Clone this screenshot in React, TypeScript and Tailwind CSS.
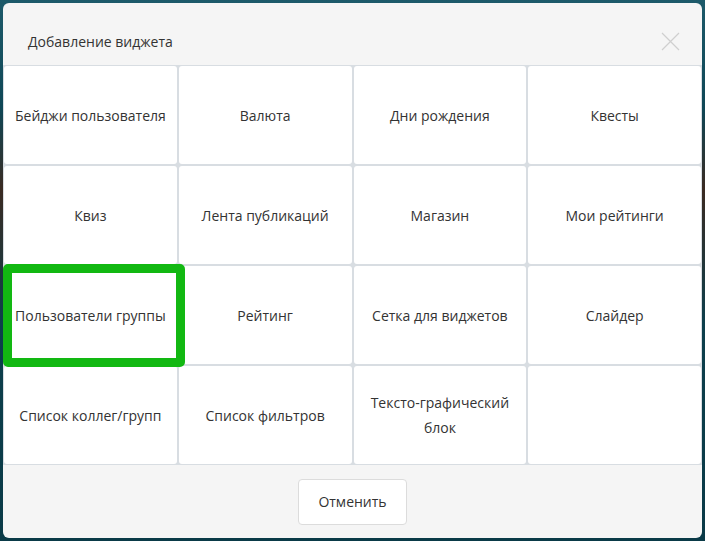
const widgets = [
  "Бейджи пользователя",
  "Валюта",
  "Дни рождения",
  "Квесты",
  "Квиз",
  "Лента публикаций",
  "Магазин",
  "Мои рейтинги",
  "Пользователи группы",
  "Рейтинг",
  "Сетка для виджетов",
  "Слайдер",
  "Список коллег/групп",
  "Список фильтров",
  "Тексто-графический блок",
]

export default function App() {
  return (
    <div
      className="relative h-[541px] w-[705px] bg-[linear-gradient(180deg,#1d5a6a_0%,#0f4756_20%,#3a2a22_35%,#0d3f4c_60%,#0a3a47_100%)] p-[3px] text-[#333]"
      style={{ fontFamily: '"Open Sans", "Noto Sans", sans-serif' }}
    >
      <div className="flex h-[535px] w-[699px] flex-col overflow-hidden rounded-md bg-[#f5f5f5]">
        <div className="flex h-[62px] shrink-0 items-center justify-between pl-[25px] pr-[22px] pt-[14px]">
          <h2 className="text-[14px] font-normal text-[#333]">Добавление виджета</h2>
          <button type="button" className="flex h-[20px] w-[20px] items-center justify-center">
            <svg width="19" height="19" viewBox="0 0 19 19" fill="none">
              <path d="M1 1L18 18M18 1L1 18" stroke="#cfcfcf" strokeWidth="1.2" />
            </svg>
          </button>
        </div>

        <div className="grid grid-cols-4 grid-rows-[repeat(4,98px)] gap-[2px] bg-[#d8dde2] p-[1px]">
          {widgets.map((w) => (
            <div
              key={w}
              className="flex items-center justify-center rounded-[3px] bg-white px-[10px] text-center text-[14px] leading-[25px]"
            >
              {w}
            </div>
          ))}
          <div className="rounded-[3px] bg-white" />
        </div>

        <div className="flex flex-1 items-center justify-center">
          <button
            type="button"
            className="h-[46px] w-[109px] rounded-[4px] border border-[#dcdcdc] bg-white text-[14px] text-[#333]"
          >
            Отменить
          </button>
        </div>
      </div>

      <div className="absolute left-[3px] top-[264px] h-[103px] w-[182px] rounded-[5px] border-[9px] border-[#12b812]" />
    </div>
  )
}
